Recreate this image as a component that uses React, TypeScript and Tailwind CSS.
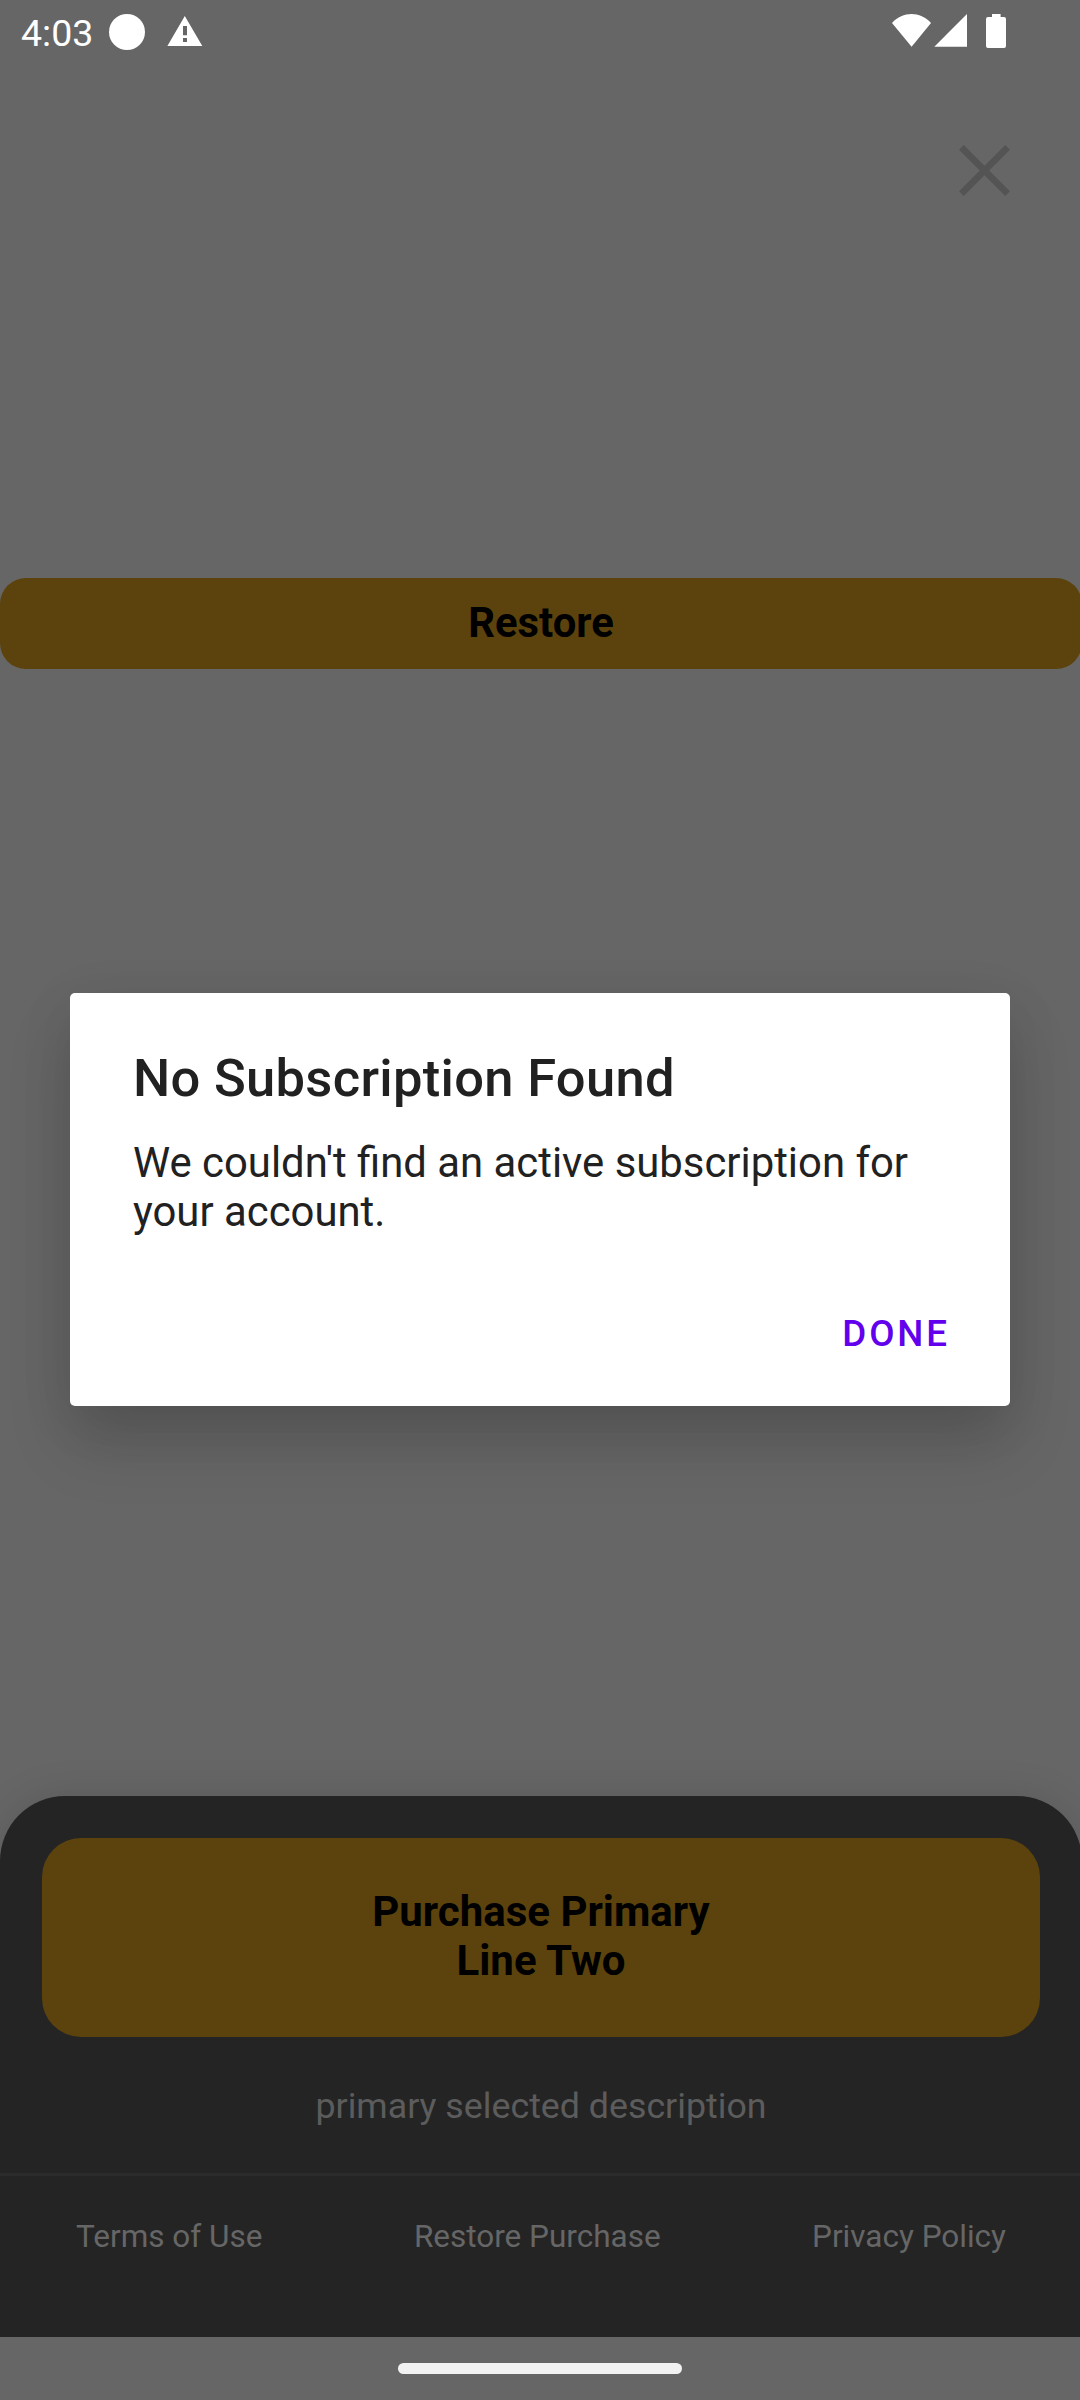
function StatusBar() {
  return (
    <header className="flex h-16 shrink-0 items-start text-white">
      <div className="w-[109px] pl-[21px] pt-[11px] text-[37.5px] leading-[44px]">4:03</div>
      <svg className="h-16 w-[95px]" viewBox="109 0 95 64" fill="currentColor">
        <circle cx="127" cy="32" r="18" />
        <path fillRule="evenodd" d="M184.8 16 202.3 46H167.4ZM183 26V35.2H187V26ZM183 38V42H187V38Z" />
      </svg>
      <svg className="ml-auto mr-[73px] h-16 w-[117px]" viewBox="890 0 117 64" fill="currentColor">
        <path d="M892 23C903 11.1 920 11.1 931 23L911.6 46.7Z" />
        <path d="M934.3 46.8 967 14V46.8Z" />
        <path d="M992 14H1000.6V17H1004Q1006 17 1006 19V46Q1006 48 1004 48H988Q986 48 986 46V19Q986 17 988 17H992Z" />
      </svg>
    </header>
  );
}

function CloseIcon() {
  return (
    <svg className="h-[51px] w-[51px]" viewBox="0 0 51 51" stroke="#545454" strokeWidth="6.6">
      <path d="M2.4 2.4 48.6 48.6M48.6 2.4 2.4 48.6" />
    </svg>
  );
}

function PurchasePanel() {
  return (
    <section className="flex h-[541px] w-[1082px] shrink-0 flex-col rounded-t-[65px] bg-[#242424] pt-[42px] shadow-[0_0_40px_rgba(0,0,0,0.12)]">
      <button className="mx-[42px] flex h-[199px] shrink-0 items-center justify-center rounded-[39px] bg-[#5c430d] pb-[3px] text-[42px] font-bold leading-[49px] text-black">
        <span>
          Purchase Primary
          <br />
          Line Two
        </span>
      </button>
      <p className="mt-[48px] text-center text-[35.75px] leading-[43px] text-[#5c5c5c]">primary selected description</p>
      <div className="mt-[45px] h-[3px] shrink-0 bg-[#2b2b2b]" />
      <nav className="mt-[42px] flex justify-between pl-[76px] pr-[76px] text-[31.5px] leading-[37px] text-[#666666]">
        <a>Terms of Use</a>
        <a>Restore Purchase</a>
        <a>Privacy Policy</a>
      </nav>
    </section>
  );
}

function Dialog() {
  return (
    <div
      role="dialog"
      className="absolute left-[70px] top-[993px] flex h-[413px] w-[940px] flex-col rounded-[5px] bg-white px-[63px] text-[#212121] shadow-[0_38px_64px_rgba(0,0,0,0.15),0_12px_56px_rgba(0,0,0,0.08)]"
    >
      <h1 className="mt-[54px] text-[52.5px] font-medium leading-[62px] tracking-[0.3px]">No Subscription Found</h1>
      <p className="mt-[29px] text-[41.85px] leading-[49px]">
        We couldn't find an active subscription for
        <br />
        your account.
      </p>
      <button className="mt-[76px] -mr-[3px] self-end text-[36.75px] font-medium leading-[43px] tracking-[2.9px] text-[#6200ee]">
        DONE
      </button>
    </div>
  );
}

export default function App() {
  return (
    <main className="relative flex h-[2400px] w-[1080px] flex-col overflow-hidden bg-[#666666] font-[Roboto,sans-serif]">
      <StatusBar />
      <div className="flex h-[514px] shrink-0 justify-end pr-[70px] pt-[81px]">
        <CloseIcon />
      </div>
      <button className="h-[91px] w-[1082px] shrink-0 rounded-[26px] bg-[#5c430d] pb-[2px] text-[41.8px] font-bold leading-[49px] text-black">
        Restore
      </button>
      <div className="grow" />
      <PurchasePanel />
      <footer className="relative flex h-[63px] shrink-0 justify-center bg-[#666666] pt-[26px]">
        <div className="h-[11px] w-[284px] rounded-full bg-[#f2f2f2]" />
      </footer>
      <Dialog />
    </main>
  );
}
